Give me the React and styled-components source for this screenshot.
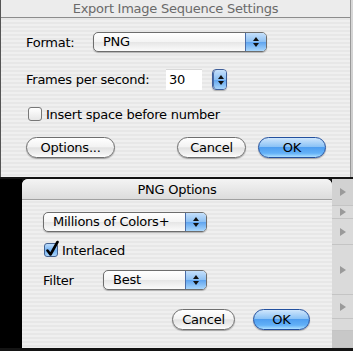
import styled, { createGlobalStyle, css } from "styled-components"

const Global = createGlobalStyle`
    html, body { margin: 0; padding: 0; background: #111; }
    body { font-family: "DejaVu Sans", "Liberation Sans", sans-serif; }
`;

const pinstripe = css`
    background: repeating-linear-gradient(to bottom, #efefef 0px, #efefef 2px, #e7e7e7 2px, #e7e7e7 4px);
`;

const Screen = styled.div`
    width: 353px;
    height: 351px;
    overflow: hidden;
    display: flex;
    flex-direction: column;
    background: #141414;
    font-size: 13px;
    letter-spacing: -0.25px;
    color: #000;
`;

const TopRow = styled.div`
    display: flex;
    height: 177px;
`;

const Window = styled.div`
    width: 349px;
    border-left: 1px solid #555;
    ${pinstripe};
    display: flex;
    flex-direction: column;
`;

const EdgeStrip = styled.div`
    flex: 1;
    background: linear-gradient(to bottom, #d8d8d8, #c9c9c9);
    border-left: 1px solid #999;
`;

const TitleBar = styled.div`
    height: ${p => p.$h}px;
    box-sizing: border-box;
    display: flex;
    align-items: center;
    justify-content: center;
    color: ${p => p.$dim ? "#6a6a6a" : "#000"};
    border-bottom: 1px solid ${p => p.$dim ? "#8c8c8c" : "#a0a0a0"};
    border-radius: ${p => p.$round ? "6px 6px 0 0" : "0"};
    background: ${p => p.$dim ? "#ececec" : "linear-gradient(to bottom, #f4f4f4, #dcdcdc)"};
    font-size: 13px;
    padding-top: ${p => p.$dim ? 0 : 1}px;
`;

const Body = styled.div`
    display: flex;
    flex-direction: column;
    padding: 0 ${p => p.$right}px 0 ${p => p.$left}px;
`;

const Row = styled.div`
    display: flex;
    align-items: center;
    margin-top: ${p => p.$top}px;
    height: ${p => p.$h}px;
`;

const Label = styled.span`
    width: ${p => p.$w ? `${p.$w}px` : "auto"};
    flex-shrink: 0;
    white-space: nowrap;
`;

const Popup = styled.div`
    width: ${p => p.$w}px;
    height: 20px;
    box-sizing: border-box;
    border: 1px solid #6d6d6d;
    border-radius: 5px;
    display: flex;
    overflow: hidden;
    box-shadow: 0 1px 1px rgba(0,0,0,0.25);
    background: linear-gradient(to bottom, #ffffff 0%, #f4f4f4 50%, #e6e6e6 51%, #fbfbfb 100%);
`;

const PopupText = styled.span`
    flex: 1;
    padding-left: ${p => p.$pad}px;
    line-height: 18px;
    white-space: nowrap;
`;

const Arrows = styled.div`
    width: ${p => p.$w}px;
    flex-shrink: 0;
    display: flex;
    flex-direction: column;
    align-items: center;
    justify-content: center;
    gap: 2px;
    border-left: 1px solid #4a6da8;
    background: linear-gradient(to bottom, #c5e0fb 0%, #8dc0f3 50%, #5fa4ef 51%, #a9d6fb 100%);
    border-radius: ${p => p.$alone ? "4px" : "0"};
`;

const Tri = styled.span`
    width: 0;
    height: 0;
    border-left: 3px solid transparent;
    border-right: 3px solid transparent;
    ${p => p.$up ? "border-bottom: 4px solid #111;" : "border-top: 4px solid #111;"}
`;

const Stepper = styled.div`
    width: 15px;
    height: 21px;
    box-sizing: border-box;
    border: 1px solid #3f5f9a;
    border-radius: 4px;
    overflow: hidden;
    display: flex;
    margin-left: 10px;
    box-shadow: 0 1px 1px rgba(0,0,0,0.25);
`;

const Field = styled.div`
    width: 36px;
    height: 21px;
    box-sizing: border-box;
    background: #fff;
    border-top: 1px solid #d8d8d8;
    padding-left: 3px;
    line-height: 20px;
`;

const Box = styled.span`
    width: 14px;
    height: 14px;
    box-sizing: border-box;
    border: 1px solid ${p => p.$on ? "#44618f" : "#777"};
    border-radius: 3px;
    background: ${p => p.$on
        ? "linear-gradient(to bottom, #bcdcfb, #72b1f1 55%, #a9d4fa)"
        : "linear-gradient(to bottom, #ffffff, #e6e6e6)"};
    position: relative;
    margin-right: 4px;
    flex-shrink: 0;
`;

const Check = styled.svg`
    position: absolute;
    left: 0px;
    top: -4px;
`;

const Buttons = styled.div`
    display: flex;
    align-items: center;
    margin-top: ${p => p.$top}px;
    height: 21px;
`;

const Spacer = styled.div`
    flex: 1;
`;

const Button = styled.button`
    width: ${p => p.$w}px;
    height: 21px;
    margin-left: ${p => p.$gap || 0}px;
    box-sizing: border-box;
    border-radius: 11px;
    font: inherit;
    font-size: 13px;
    letter-spacing: -0.25px;
    padding: 0;
    color: #000;
    border: 1px solid ${p => p.$primary ? "#23509e" : "#6f6f6f"};
    box-shadow: 0 1px 1px rgba(0,0,0,0.3);
    background: ${p => p.$primary
        ? "linear-gradient(to bottom, #cfe6fc 0%, #8cc3f6 45%, #4f9ef0 50%, #63b1f7 80%, #aee0ff 100%)"
        : "linear-gradient(to bottom, #ffffff 0%, #f3f3f3 45%, #e2e2e2 52%, #f2f2f2 85%, #ffffff 100%)"};
`;

const BottomRow = styled.div`
    display: flex;
    margin-top: 2px;
    height: 169px;
`;

const Gutter = styled.div`
    width: 22px;
    background: #000;
`;

const Sheet = styled.div`
    width: 310px;
    display: flex;
    flex-direction: column;
    border-radius: 6px 6px 0 0;
    ${pinstripe};
    box-shadow: 0 0 2px rgba(0,0,0,0.5);
`;

const List = styled.div`
    flex: 1;
    display: flex;
    flex-direction: column;
    background: #cfcfcf;
`;

const ListRow = styled.div`
    height: ${p => p.$h}px;
    box-sizing: border-box;
    display: flex;
    align-items: center;
    padding-left: 8px;
    background: ${p => p.$bg || "#dadada"};
    border-bottom: 1px solid #c4c4c4;
`;

const Disclosure = styled.span`
    width: 0;
    height: 0;
    border-top: 4px solid transparent;
    border-bottom: 4px solid transparent;
    border-left: 6px solid #9a9a9a;
`;

const Updown = ({ w, alone }) => (
    <Arrows $w={w} $alone={alone}>
        <Tri $up />
        <Tri />
    </Arrows>
)

const Checkbox = ({ on, children }) => (
    <>
        <Box $on={on}>
            {on && (
                <Check width="14" height="18" viewBox="0 0 14 18">
                    <path d="M2.5 10.5 L5.5 14.5 L12.5 2" fill="none" stroke="#000" strokeWidth="2.6" strokeLinecap="round" strokeLinejoin="round" />
                </Check>
            )}
        </Box>
        <Label>{children}</Label>
    </>
)

const App = () => {
    const rows = [
        { h: 27, tri: true, bg: "#d2d2d2" },
        { h: 13, tri: true },
        { h: 26, tri: true },
        { h: 50, tri: true },
        { h: 24, tri: true },
        { h: 12 },
        { h: 17, bg: "#c8c8c8" },
    ];

    return (
        <Screen>
            <Global />
            <TopRow>
                <Window>
                    <TitleBar $h={18} $dim>Export Image Sequence Settings</TitleBar>
                    <Body $left={25} $right={24}>
                        <Row $top={14} $h={20}>
                            <Label $w={67}>Format:</Label>
                            <Popup $w={174}>
                                <PopupText $pad={9}>PNG</PopupText>
                                <Updown w={20} />
                            </Popup>
                        </Row>
                        <Row $top={17} $h={21}>
                            <Label $w={140}>Frames per second:</Label>
                            <Field>30</Field>
                            <Stepper><Updown w={13} alone /></Stepper>
                        </Row>
                        <Row $top={17} $h={14}>
                            <span style={{ width: 2 }} />
                            <Checkbox>Insert space before number</Checkbox>
                        </Row>
                        <Buttons $top={16}>
                            <Button $w={89}>Options...</Button>
                            <Spacer />
                            <Button $w={69}>Cancel</Button>
                            <Button $w={68} $gap={12} $primary>OK</Button>
                        </Buttons>
                    </Body>
                </Window>
                <EdgeStrip />
            </TopRow>
            <BottomRow>
                <Gutter />
                <Sheet>
                    <TitleBar $h={21} $round>PNG Options</TitleBar>
                    <Body $left={21} $right={22}>
                        <Row $top={12} $h={20}>
                            <Popup $w={164}>
                                <PopupText $pad={9}>Millions of Colors+</PopupText>
                                <Updown w={20} />
                            </Popup>
                        </Row>
                        <Row $top={11} $h={14}>
                            <span style={{ width: 1 }} />
                            <Checkbox on>Interlaced</Checkbox>
                        </Row>
                        <Row $top={13} $h={20}>
                            <Label $w={60}>Filter</Label>
                            <Popup $w={104}>
                                <PopupText $pad={9}>Best</PopupText>
                                <Updown w={20} />
                            </Popup>
                        </Row>
                        <Buttons $top={19}>
                            <Spacer />
                            <Button $w={63}>Cancel</Button>
                            <Button $w={57} $gap={18} $primary>OK</Button>
                        </Buttons>
                    </Body>
                </Sheet>
                <List>
                    {rows.map((r, i) => (
                        <ListRow key={i} $h={r.h} $bg={r.bg}>
                            {r.tri && <Disclosure />}
                        </ListRow>
                    ))}
                </List>
            </BottomRow>
        </Screen>
    )
}

export default App
